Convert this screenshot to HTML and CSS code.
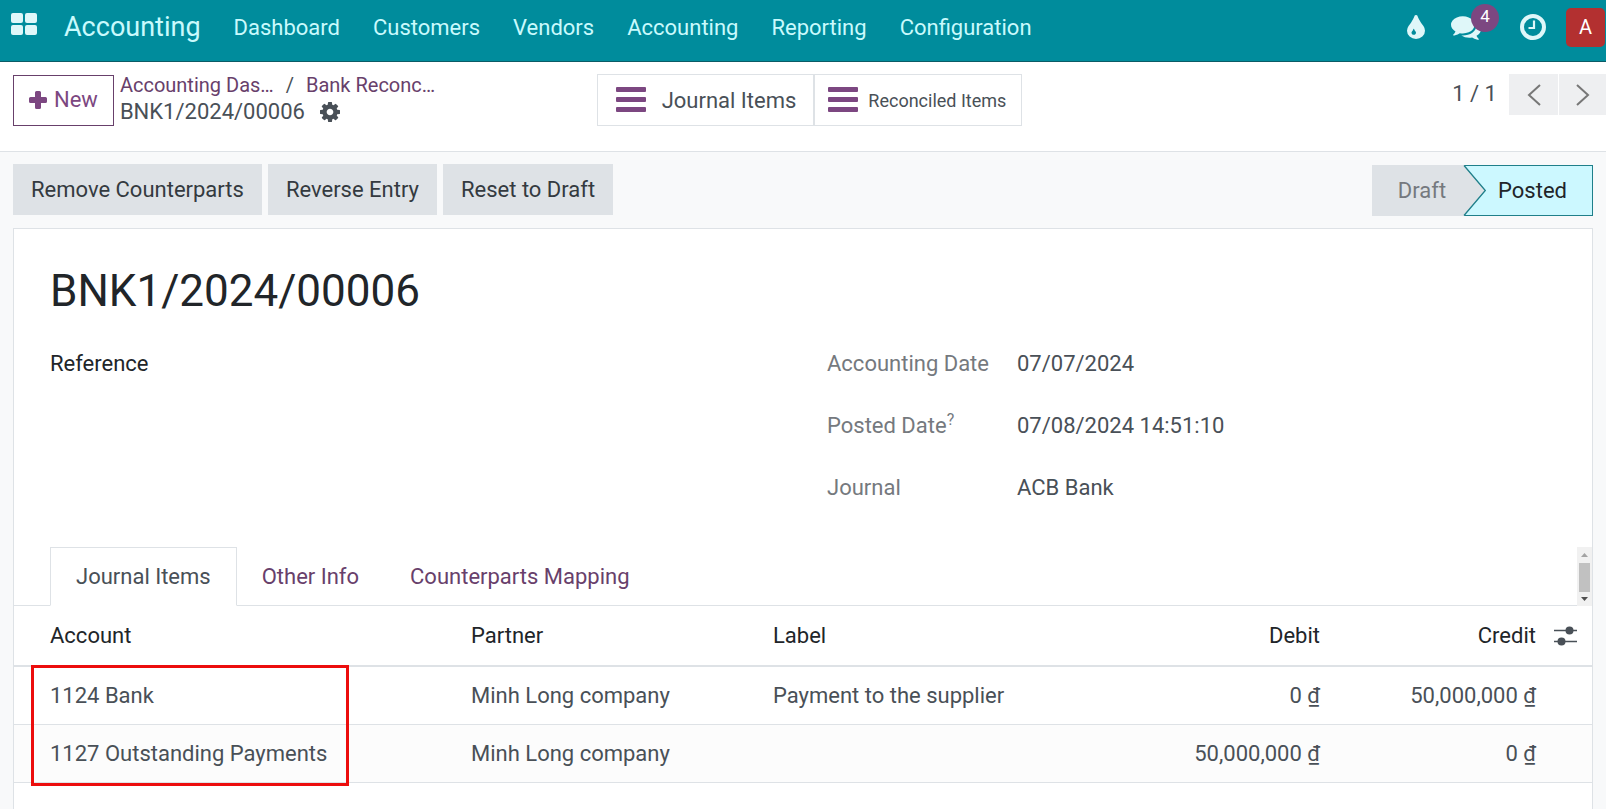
FILE: index.html
```html
<!DOCTYPE html>
<html lang="en">
<head>
<meta charset="utf-8">
<title>BNK1/2024/00006</title>
<link rel="stylesheet" href="styles.css">
</head>
<body>
<header class="navbar">
  <button class="nav-icon apps" aria-label="Apps">
    <svg width="26" height="22" viewBox="0 0 26 22"><rect width="12" height="10" rx="2"/><rect x="14" width="12" height="10" rx="2"/><rect y="12" width="12" height="10" rx="2"/><rect x="14" y="12" width="12" height="10" rx="2"/></svg>
  </button>
  <a class="brand" href="#">Accounting</a>
  <nav class="menu">
    <a href="#">Dashboard</a>
    <a href="#">Customers</a>
    <a href="#">Vendors</a>
    <a href="#">Accounting</a>
    <a href="#">Reporting</a>
    <a href="#">Configuration</a>
  </nav>
  <div class="systray">
    <button class="nav-icon" aria-label="Theme">
      <svg width="18" height="25" viewBox="0 -128 1024 1536" preserveAspectRatio="none"><path d="M512 1024q0-36-20-69-1-1-15.500-22.500t-25.500-38-25-44-21-50.500q-4-16-21-16t-21 16q-7 23-21 50.500t-25 44-25.500 38-15.500 22.500q-20 33-20 69 0 53 37.500 90.500t90.500 37.500 90.500-37.500 37.500-90.500zm512-128q0 212-150 362t-362 150-362-150-150-362q0-145 81-275 6-9 62.500-90.500t101-151 99.500-178 83-201.500q9-30 34-47t51-17 51.500 17 33.500 47q28 93 83 201.500t99.500 178 101 151 62.500 90.500q81 127 81 275z"/></svg>
    </button>
    <button class="nav-icon chat" aria-label="Messages">
      <svg width="30" height="30" viewBox="0 0 1792 1792"><path d="M1408 768q0 139-94 257t-256.500 186.500-353.500 68.500q-86 0-176-16-124 88-278 128-36 9-86 16h-3q-11 0-20.500-8t-11.500-21q-1-3-1-6.500t.5-6.500 2-6l2.500-5 3.500-5.500 4-5 4.500-5 4-4.500q5-6 23-25t26-29.500 22.500-29 25-38.500 20.500-44q-124-72-195-177t-71-224q0-139 94-257t256.500-186.500 353.500-68.500 353.500 68.500 256.500 186.500 94 257zm384 256q0 120-71 224.500t-195 176.500q10 24 20.500 44t25 38.500 22.500 29 26 29.500 23 25q1 1 4 4.500t4.500 5 4 5 3.500 5.500l2.500 5 2 6 .5 6.500-1 6.500q-3 14-13 22t-22 7q-50-7-86-16-154-40-278-128-90 16-176 16-271 0-472-132 58 4 88 4 161 0 309-45t264-129q125-92 192-212t67-254q0-77-23-152 129 71 204 178t75 230z"/></svg>
      <span class="badge">4</span>
    </button>
    <button class="nav-icon" aria-label="Activities">
      <svg width="26" height="26" viewBox="0 0 26 26"><circle cx="13" cy="13" r="11" fill="none" stroke="#dff7f9" stroke-width="4"/><path d="M14 6.500V14H8.500" fill="none" stroke="#dff7f9" stroke-width="2.200"/></svg>
    </button>
    <button class="avatar" aria-label="User">A</button>
  </div>
</header>

<section class="control-panel">
  <div class="cp-left">
    <button class="btn-new"><svg width="18" height="18" viewBox="0 0 18 18"><path d="M7.500 0h3q1.500 0 1.500 1.500V6h4.500Q18 6 18 7.500v3q0 1.500-1.500 1.500H12v4.500q0 1.500-1.500 1.500h-3Q6 18 6 16.500V12H1.500Q0 12 0 10.500v-3Q0 6 1.500 6H6V1.500Q6 0 7.500 0z"/></svg>New</button>
    <div class="breadcrumb">
      <div class="crumbs"><a href="#">Accounting Das…</a><span>/</span><a href="#">Bank Reconc…</a></div>
      <div class="current">BNK1/2024/00006
        <button class="cog" aria-label="Actions"><svg width="20" height="20" viewBox="128 128 1536 1536"><path d="M1152 896q0-106-75-181t-181-75-181 75-75 181 75 181 181 75 181-75 75-181zm512-109v222q0 12-8 23t-20 13l-185 28q-19 54-39 91 35 50 107 138 10 12 10 25t-9 23q-27 37-99 108t-94 71q-12 0-26-9l-138-108q-44 23-91 38-16 136-29 186-7 28-36 28h-222q-14 0-24.500-8.500t-11.500-21.500l-28-184q-49-16-90-37l-141 107q-10 9-25 9-14 0-25-11-126-114-165-168-7-10-7-23 0-12 8-23 15-21 51-66.500t54-70.500q-27-50-41-99l-183-27q-13-2-21-12.500t-8-23.500v-222q0-12 8-23t19-13l186-28q14-46 39-92-40-57-107-138-10-12-10-24 0-10 9-23 26-36 98.500-107.500t94.500-71.500q13 0 26 10l138 107q44-23 91-38 16-136 29-186 7-28 36-28h222q14 0 24.500 8.500t11.500 21.500l28 184q49 16 90 37l142-107q9-9 24-9 13 0 25 10 129 119 165 170 7 8 7 22 0 12-8 23-15 21-51 66.500t-54 70.500q26 50 41 98l183 28q13 2 21 12.500t8 23.500z"/></svg></button>
      </div>
    </div>
  </div>
  <div class="stats">
    <button class="stat stat-wide"><svg width="30" height="25" viewBox="0 0 30 25"><rect width="30" height="5" rx="1"/><rect y="10" width="30" height="5" rx="1"/><rect y="20" width="30" height="5" rx="1"/></svg><span>Journal Items</span></button>
    <button class="stat stat-small"><svg width="30" height="25" viewBox="0 0 30 25"><rect width="30" height="5" rx="1"/><rect y="10" width="30" height="5" rx="1"/><rect y="20" width="30" height="5" rx="1"/></svg><span>Reconciled Items</span></button>
  </div>
  <div class="pager">
    <span>1 / 1</span>
    <div class="pager-buttons">
      <button aria-label="Previous"><svg width="14" height="24" viewBox="0 0 14 24"><path d="M13 2 2 12l11 10"/></svg></button>
      <button aria-label="Next"><svg width="14" height="24" viewBox="0 0 14 24"><path d="M1 2l11 10L1 22"/></svg></button>
    </div>
  </div>
</section>

<main class="form">
  <div class="statusbar">
    <div class="actions">
      <button>Remove Counterparts</button>
      <button>Reverse Entry</button>
      <button>Reset to Draft</button>
    </div>
    <div class="status">
      <button class="draft">Draft</button>
      <button class="posted"><svg class="notch" width="24" height="51" viewBox="0 0 24 51"><path d="M0 0H1L22 25.500 1 51H0z" fill="#dee2e6"/><path d="M1 .5 22.300 25.500 1 50.500" fill="none" stroke="#1f7f8a" stroke-width="1.300"/></svg>Posted</button>
    </div>
  </div>

  <article class="sheet">
    <h1>BNK1/2024/00006</h1>
    <div class="fields">
      <div class="reference">Reference</div>
      <dl>
        <dt>Accounting Date</dt><dd>07/07/2024</dd>
        <dt>Posted Date<sup>?</sup></dt><dd>07/08/2024 14:51:10</dd>
        <dt>Journal</dt><dd>ACB Bank</dd>
      </dl>
    </div>
    <div class="tabs" role="tablist">
      <button class="tab active" role="tab">Journal Items</button>
      <button class="tab" role="tab">Other Info</button>
      <button class="tab" role="tab">Counterparts Mapping</button>
      <div class="scroll">
        <svg width="7" height="4" viewBox="0 0 7 4"><path d="M0 4 3.500 0 7 4z" fill="#a3a3a3"/></svg>
        <i class="thumb"></i>
        <svg width="7" height="4" viewBox="0 0 7 4"><path d="M0 0 3.500 4 7 0z" fill="#505050"/></svg>
      </div>
    </div>
    <div class="lines">
      <table>
        <colgroup><col class="c-account"><col class="c-partner"><col><col class="c-amount"><col class="c-amount"><col class="c-opt"></colgroup>
        <thead>
          <tr><th>Account</th><th>Partner</th><th>Label</th><th class="num">Debit</th><th class="num">Credit</th>
          <th class="opt"><button aria-label="Optional columns"><svg width="23" height="20" viewBox="0 0 23 20"><path d="M0 4.500h23M0 15.500h23" stroke="#495057" stroke-width="1.600"/><circle cx="15.500" cy="4.500" r="4"/><circle cx="7.500" cy="15.500" r="4"/></svg></button></th></tr>
        </thead>
        <tbody>
          <tr><td>1124 Bank</td><td>Minh Long company</td><td>Payment to the supplier</td><td class="num">0 ₫</td><td class="num">50,000,000 ₫</td><td></td></tr>
          <tr><td>1127 Outstanding Payments</td><td>Minh Long company</td><td></td><td class="num">50,000,000 ₫</td><td class="num">0 ₫</td><td></td></tr>
        </tbody>
      </table>
      <div class="highlight"></div>
    </div>
  </article>
</main>
</body>
</html>
```

FILE: styles.css
```css
* { box-sizing: border-box; }

body {
  margin: 0;
  min-height: 100vh;
  display: flex;
  flex-direction: column;
  font: 22px/33px Roboto, "Noto Sans", sans-serif;
  color: #495057;
  background: #f8f9fa;
  overflow: hidden;
}

button {
  font: inherit;
  color: inherit;
  border: 0;
  padding: 0;
  background: none;
  white-space: nowrap;
}

a { text-decoration: none; color: #68406b; }
svg { display: block; flex: none; }

.navbar {
  display: flex;
  height: 62px;
  padding: 0 0 8px 11px;
  align-items: center;
  background: #008c9c;
  border-bottom: 1px solid #0b5b66;
}
.navbar a { color: #c9fafd; }
.nav-icon { fill: #dff7f9; }
.apps { padding-bottom: 6px; }
.brand { font-size: 27px; margin: 0 33px 0 27px; padding-top: 2px; }
.menu { display: flex; gap: 33px; padding-top: 2px; }
.systray {
  display: flex;
  align-items: center;
  margin-left: auto;
  padding-right: 1px;
}
.systray .nav-icon { margin-right: 20px; }
.systray .chat { position: relative; margin: 0 39px 0 6px; }
.badge {
  position: absolute;
  left: 20px;
  top: -8px;
  width: 28px;
  height: 28px;
  border-radius: 50%;
  background: #7c4781;
  color: #fff;
  font-size: 17px;
  line-height: 25px;
}
.avatar {
  width: 39px;
  height: 39px;
  margin-top: 2px;
  border-radius: 5px;
  background: #b33030;
  color: #fff;
  font-size: 20px;
}

.control-panel {
  display: grid;
  grid-template-columns: 1fr auto 1fr;
  align-items: start;
  height: 90px;
  padding: 12px 0 0 13px;
  background: #fff;
  border-bottom: 1px solid #dee2e6;
}
.cp-left { display: flex; gap: 6px; }
.btn-new {
  display: flex;
  align-items: center;
  gap: 7px;
  height: 51px;
  margin-top: 1px;
  padding: 0 15px 2px;
  border: 1px solid #68406b;
  color: #7c4781;
  fill: #7c4781;
}
.breadcrumb { line-height: 30px; }
.crumbs { display: flex; gap: 12px; font-size: 20px; line-height: 23px; }
.current { display: flex; align-items: center; gap: 15px; }
.cog { fill: #495057; }
.stats { display: flex; fill: #7c4781; }
.stat {
  display: flex;
  align-items: center;
  height: 52px;
  border: 1px solid #dee2e6;
}
.stat svg { margin-bottom: 2px; }
.stat-wide { gap: 16px; padding: 0 17px 0 18px; }
.stat-small { gap: 10px; padding: 0 15px 0 13px; font-size: 18px; }
.pager { display: flex; justify-content: flex-end; gap: 12px; line-height: 39px; }
.pager-buttons { display: flex; gap: 1px; }
.pager-buttons button {
  display: grid;
  place-items: center;
  width: 49px;
  height: 41px;
  background: #eeeff1;
}
.pager-buttons button:last-child { width: 47px; }
.pager-buttons path { fill: none; stroke: #777; stroke-width: 2; }

.form { flex: 1; display: flex; flex-direction: column; padding: 12px 13px 0; }
.statusbar { display: flex; justify-content: space-between; margin-bottom: 12px; }
.actions { display: flex; gap: 6px; }
.actions button { height: 51px; padding: 0 18px; background: #dee2e6; color: #343a40; }
.status { display: flex; padding-top: 1px; }
.status button { height: 51px; }
.draft { padding: 0 17px 0 26px; background: #dee2e6; color: #75797e; }
.status .posted {
  position: relative;
  padding: 0 25px 0 35px;
  border: 1px solid #1f7f8a;
  border-left: 0;
  background: #ccf8ff;
  color: #212529;
}
.notch { position: absolute; left: 0; top: -1px; }

.sheet { flex: 1; background: #fff; border: 1px solid #dee2e6; border-bottom: 0; }
h1 {
  margin: 35px 36px 29px;
  font-size: 44px;
  line-height: 54px;
  font-weight: 400;
  color: #212529;
}
.fields {
  display: grid;
  grid-template-columns: 1fr 1fr;
  gap: 48px;
  padding: 0 36px;
}
.reference { color: #212529; }
dl { display: grid; grid-template-columns: 190px 1fr; row-gap: 29px; margin: 0; }
dt { color: #75797e; }
dd { margin: 0; }
sup { font-size: 16px; line-height: 0; vertical-align: 8px; }

.tabs {
  display: flex;
  gap: 1px;
  height: 59px;
  margin-top: 43px;
  padding-left: 36px;
  box-shadow: inset 0 -1px #dee2e6;
}
.tab { padding: 0 25px; color: #68406b; }
.tab.active {
  margin-right: -1px;
  border: 1px solid #dee2e6;
  border-bottom-color: #fff;
  background: #fff;
  color: #495057;
}
.scroll {
  display: flex;
  flex-direction: column;
  align-items: center;
  justify-content: space-between;
  width: 15px;
  margin-left: auto;
  padding: 6px 0 5px;
  background: #f1f1f1;
}
.thumb { width: 11px; height: 29px; background: #c1c1c1; }

.lines { position: relative; }
table { width: 100%; border-collapse: collapse; table-layout: fixed; }
.c-account { width: 449px; }
.c-partner { width: 302px; }
.c-amount { width: 216px; }
.c-opt { width: 49px; }
th, td {
  padding: 12px 8px;
  text-align: left;
  font-weight: 400;
  border-bottom: 1px solid #dee2e6;
}
th { padding: 13px 8px; color: #212529; border-bottom-width: 2px; }
th:first-child, td:first-child { padding-left: 36px; }
tbody tr:nth-child(even) { background: #fcfcfc; }
th.num, td.num { text-align: right; padding-right: 7px; }
.opt button { display: block; margin-left: 3px; fill: #495057; }
.highlight {
  position: absolute;
  left: 17px;
  top: 59px;
  width: 318px;
  height: 121px;
  border: 3px solid #ec0d0d;
}
```
